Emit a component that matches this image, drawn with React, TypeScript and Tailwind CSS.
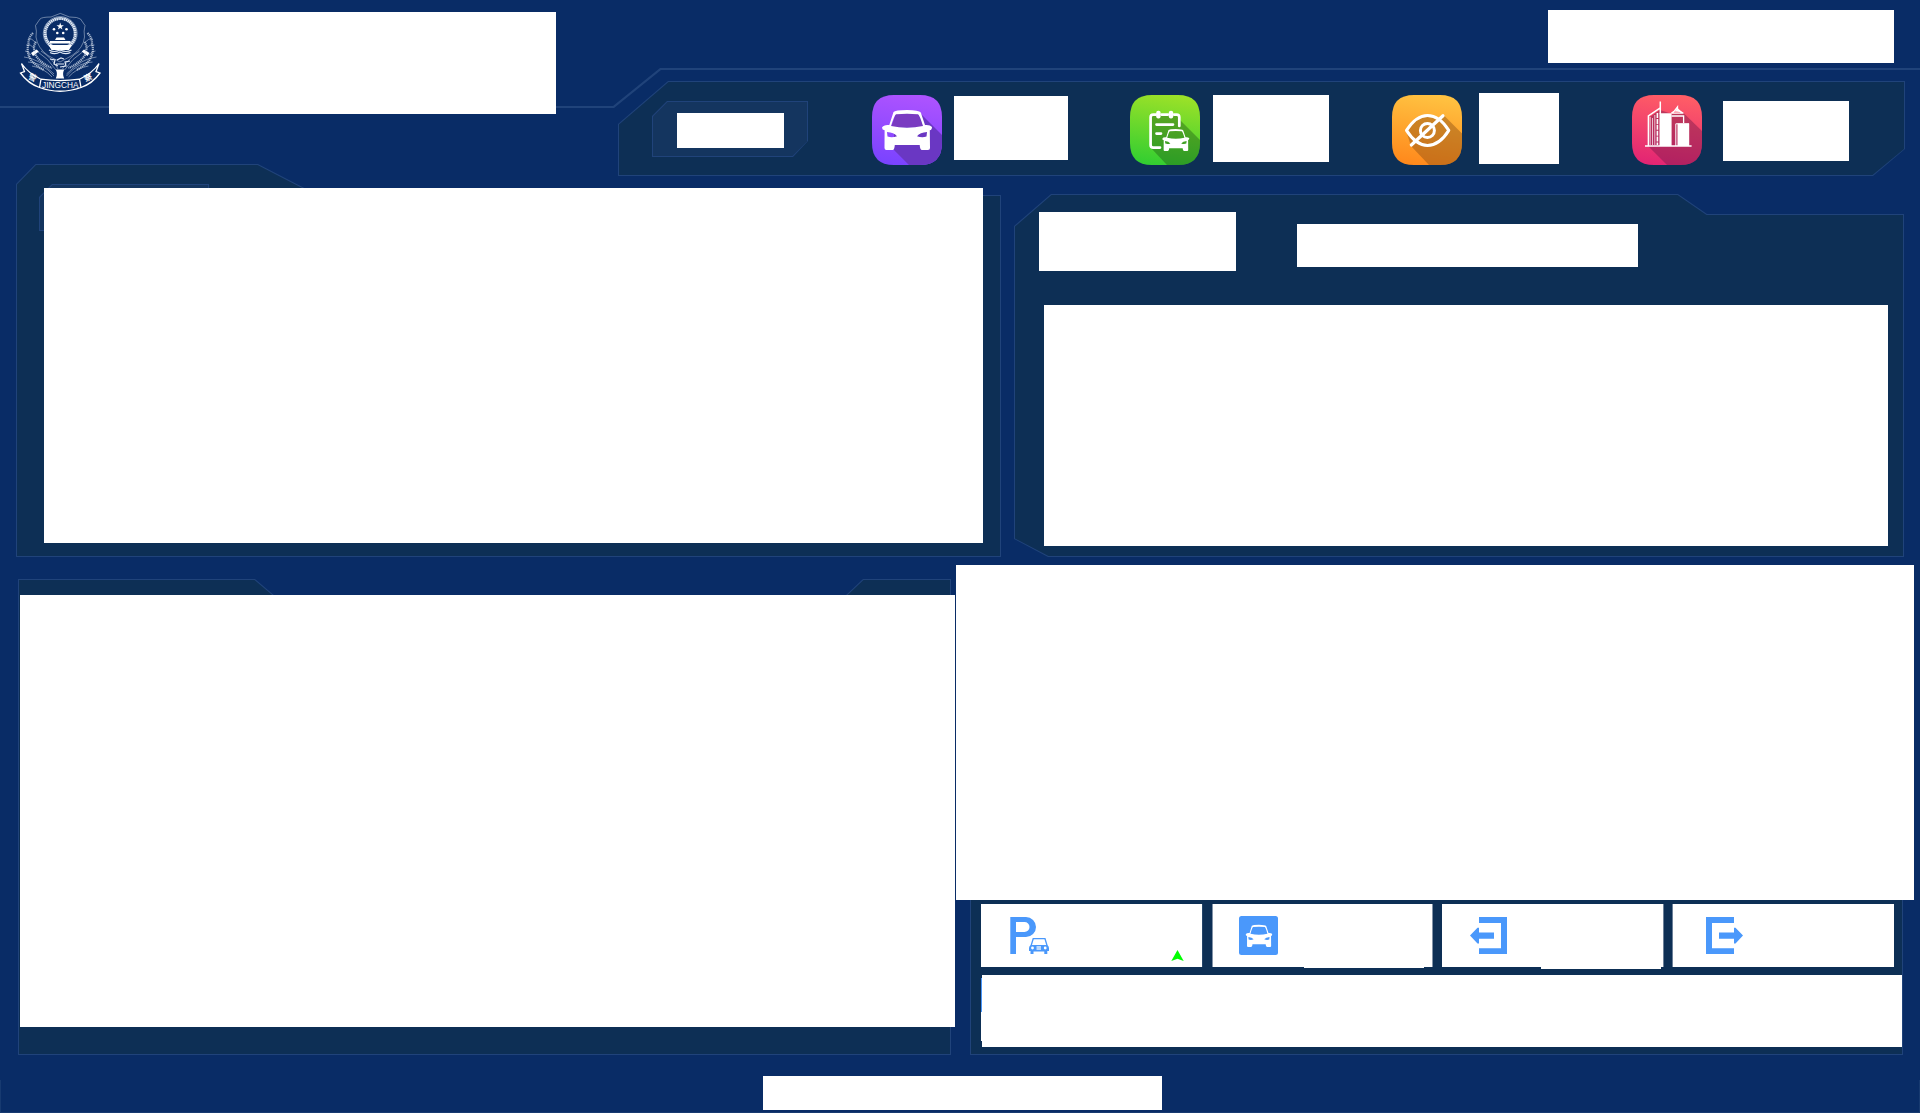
import React from "react";

type FrameProps = {
  className: string;
  outer: string;
  inner: string;
  fill?: string;
  children?: React.ReactNode;
};

/* Panel with cut corners: a border-coloured shape with a 1px smaller fill on top. */
function Frame({ className, outer, inner, fill = "bg-[#0d2f55]", children }: FrameProps) {
  return (
    <section className={`relative shrink-0 ${className}`}>
      <div className={`absolute inset-0 bg-[#20437a] ${outer}`}>
        <div className={`absolute inset-px ${fill} ${inner}`} />
      </div>
      <div className="relative">{children}</div>
    </section>
  );
}

const CAR =
  "M21.5 17Q23 15.2 35 15Q47 15.2 48.8 17.6L53 30Q58 29.5 60 32Q60 35 57.8 35.2L58 53Q58 55 56 55H50Q48 55 47.7 50H22.8Q22.5 55 20.5 55H14.5Q12.5 55 12.5 53L12.6 35.3Q10 35 10 32.5Q11.5 29.5 17.3 30ZM24 19.3Q35 18.3 46 19.3Q47.5 20 51 31Q35 34.6 19 31Q22.5 19.7 24 19.3ZM15 37Q22 37.5 25 41.2Q20 43 15.5 41.5ZM55 37Q48 37.5 45 41.2Q50 43 54.5 41.5Z";

function Tile({
  id,
  from,
  to,
  shadow,
  shade,
  children,
}: {
  id: string;
  from: string;
  to: string;
  shadow: string;
  shade: string;
  children: React.ReactNode;
}) {
  return (
    <svg className="size-[70px] shrink-0" viewBox="0 0 70 70" fill="none">
      <defs>
        <linearGradient id={id} x1="0.55" y1="0" x2="0.4" y2="1">
          <stop stopColor={from} />
          <stop offset="1" stopColor={to} />
        </linearGradient>
        <clipPath id={`${id}-clip`}>
          <path d="M22 0H48Q70 0 70 22V48Q70 70 48 70H22Q0 70 0 48V22Q0 0 22 0Z" />
        </clipPath>
      </defs>
      <g clipPath={`url(#${id}-clip)`}>
        <path d="M0 0H70V70H0Z" fill={`url(#${id})`} />
        <path d={shadow} fill={shade} />
        {children}
      </g>
    </svg>
  );
}

function CarTile() {
  return (
    <Tile id="car" from="#ad53ff" to="#7a43ff" shade="#6a37c3" shadow="M24 18H48L70 40V70H37L22 55V34H20Z">
      <path d="M24 19H46L51 32H19Z" fill="#7a3bc1" />
      <path d={CAR} fill="#fff" fillRule="evenodd" />
    </Tile>
  );
}

function ClipboardTile() {
  return (
    <Tile id="clip" from="#9be128" to="#33ce31" shade="rgba(25,75,20,0.38)" shadow="M21 20H50V25L70 45V70H37L21 53Z">
      <path
        d="M30 52.6H23.2Q20.6 52.6 20.6 50V22.3Q20.6 19.6 23.2 19.6H26M31.5 19.6H38M44 19.6H46.6Q49.3 19.6 49.3 22.3V31M26.5 29.6H43M26.5 38.6H31"
        stroke="#fff"
        strokeWidth="2.7"
        strokeLinecap="round"
      />
      <rect x="26.2" y="15.8" width="4.4" height="7.6" rx="2" fill="#fff" />
      <rect x="38.8" y="15.8" width="4.4" height="7.6" rx="2" fill="#fff" />
      <path d={CAR} fill="#fff" fillRule="evenodd" transform="translate(26.9 25.75) scale(0.54 0.55)" />
    </Tile>
  );
}

function EyeTile() {
  return (
    <Tile id="eye" from="#ffc241" to="#ff891c" shade="rgba(130,75,20,0.42)" shadow="M51.5 20L70 38.5V70H37L19 51L14 35.5L24 24L36 20L46 23Z">
      <path d="M14.5 35.4Q24 20.4 35.5 20.4Q47.5 20.4 56.8 35.4Q47.5 50.4 35.5 50.4Q24 50.4 14.5 35.4Z" stroke="#fff" strokeWidth="3" strokeLinejoin="round" />
      <circle cx="35.4" cy="35.5" r="7" stroke="#fff" strokeWidth="3" />
      <path d="M19.3 50L51 20.8" stroke="#fff" strokeWidth="3.2" strokeLinecap="round" />
    </Tile>
  );
}

function BuildingsTile() {
  return (
    <Tile id="city" from="#ff5d66" to="#e32573" shade="rgba(110,25,75,0.42)" shadow="M18 22L28 15L40 19L51 17.5L70 36V70H35L17 52Z">
      <path d="M13 51H59.6" stroke="#fff" strokeWidth="1.7" />
      <path d="M16.4 51V21L28.3 12.8M28.3 6.5V19" stroke="#fff" strokeWidth="1.5" />
      <path d="M18.2 50V22M20.5 50V23M22.8 50V20" stroke="#fff" strokeWidth="0.7" />
      <path d="M25.4 18V50" stroke="#fff" strokeWidth="1.6" strokeDasharray="5 0.9" />
      <path d="M27.5 18.3H39.6V51H27.5Z" fill="#fff" />
      <path d="M39.3 18.2L42.4 16L45.5 12V15L51 18M39.3 18.2H51.5M39.5 21H51.6V28" stroke="#fff" strokeWidth="1.3" />
      <path d="M42.6 16.6L45.5 13L50 17Z" fill="#fff" />
      <path d="M43.8 51V28.8H57" stroke="#fff" strokeWidth="1" />
      <path d="M45.5 28.4H57.2V51H45.5Z" fill="#fff" />
    </Tile>
  );
}

function Emblem() {
  return (
    <svg className="h-[82px] w-[82px]" viewBox="19 12 82 82" fill="none" stroke="#dfe8f4">
      <path d="M60.3 13.4L51 17Q42 17 40 19L35.5 25.5Q37 31 36 37Q37.5 48 48 55.5L60 62L72 55.5Q83.5 48 84.5 37Q83.5 31 85 25.5L80.5 19Q78 17 69.5 17Z" strokeWidth="0.6" opacity="0.75" />
      <circle cx="60.2" cy="33.5" r="15" strokeWidth="3" strokeDasharray="1.6 0.35" />
      <circle cx="60.2" cy="33.5" r="16.9" strokeWidth="0.5" />
      <path d="M60.2 22.6L61.1 25.3H63.9L61.6 27L62.5 29.6L60.2 28L57.9 29.6L58.8 27L56.5 25.3H59.3Z" fill="#fff" stroke="none" />
      <g fill="#fff" stroke="none">
        <circle cx="54" cy="29.2" r="1.3" />
        <circle cx="66.5" cy="29.2" r="1.3" />
        <circle cx="57.3" cy="33" r="1.3" />
        <circle cx="63.2" cy="33" r="1.3" />
        <path d="M55 40L56.5 37.5H64L65.5 40ZM50 41H70.5V43.6H50ZM48.5 45H72L69 50H51.5Z" />
        <path d="M31 53L36.5 49.5L38.8 51.5L33 56ZM89.5 53L84 49.5L81.7 51.5L87.5 56Z" />
      </g>
      <path d="M49 50Q54 53 60 50Q66 53 71.5 50M50 52.5Q55 55 60 52Q65 55 70.5 52.5" strokeWidth="1.2" />
      <g strokeWidth="2.2" strokeDasharray="1.2 0.7" opacity="0.75">
        <path d="M33 33Q28 38 28.5 44Q26 52 31 60Q36 66 44 70M36 42Q32 47 36 56Q42 64 52 68" />
        <path d="M87.5 33Q92.5 38 92 44Q94.5 52 89.5 60Q84.5 66 76.5 70M84.5 42Q88.5 47 84.5 56Q78.5 64 68.5 68" />
      </g>
      <g strokeWidth="0.6" opacity="0.8">
        <path d="M26 45Q31 44 34 48M25 51Q29 51 31 55M28 39Q32 38 35 42M24 57Q38 58 54 74M28 62Q42 62 54 76M38 52Q48 58 56 70M41 51Q52 58 58 69M32 66Q44 68 52 77" />
        <path d="M94.5 45Q89.5 44 86.5 48M95.5 51Q91.5 51 89.5 55M92.5 39Q88.5 38 85.5 42M96.5 57Q82.5 58 66.5 74M92.5 62Q78.5 62 66.5 76M82.5 52Q72.5 58 64.5 70M79.5 51Q68.5 58 62.5 69M88.5 66Q76.5 68 68.5 77" />
      </g>
      <path d="M50 59L55 60L54 64L58 66M64 59L61 58L57 60M70 61L65 62L66 66L60 67M56 64H64" strokeWidth="1.2" />
      <path d="M55.8 69.5H64.2Q62 74 64.2 78.5H55.8Q58 74 55.8 69.5Z" fill="#fff" stroke="none" />
      <path d="M41 79.2Q60 82 79.5 79.2L81 87.5Q60 95 39.5 87.5Z" fill="#092c66" strokeWidth="1.3" stroke="#fff" />
      <path d="M40.5 79Q28 73 21.5 63.5L24.5 71.5L20.5 73Q28 83.5 39.5 87.5M80 79Q92.5 73 99 63.5L96 71.5L100 73Q92.5 83.5 81 87.5" strokeWidth="1.3" stroke="#fff" />
      <g fill="#fff" stroke="none" fontFamily="'Liberation Sans', sans-serif">
        <text x="42" y="88.2" fontSize="9" textLength="36.500" lengthAdjust="spacingAndGlyphs">JINGCHA</text>
        <text x="28.500" y="80.500" fontSize="8" fontWeight="700" fontFamily="'Noto Sans CJK SC', sans-serif" transform="rotate(24 32.500 77.500)">警</text>
        <text x="84" y="80.500" fontSize="8" fontWeight="700" fontFamily="'Noto Sans CJK SC', sans-serif" transform="rotate(-24 88 77.500)">察</text>
      </g>
    </svg>
  );
}

function ParkingIcon() {
  return (
    <svg className="h-[37px] w-10" viewBox="0 0 40 37" fill="#4a98fb">
      <path fillRule="evenodd" d="M0.3 0H16A10 10 0 0 1 16 20H6V37H0.3ZM6 5V15H14.5A5 5 0 0 0 14.5 5Z" />
      <path d="M21 29L23.2 21.7H35L37.2 29" fill="none" stroke="#4a98fb" strokeWidth="1.3" />
      <path d="M21 28H37Q39 29 39 31V34H37.3V37H34.3V34.5H23.5V37H20.5V34H19V31Q19 29 21 28Z" />
      <circle cx="22.5" cy="31" r="1.4" fill="#fff" />
      <circle cx="35.2" cy="31" r="1.4" fill="#fff" />
      <path d="M26.5 29H31V33H26.5Z" fill="#b9d8fe" />
    </svg>
  );
}

function EntryIcon() {
  return (
    <svg className="size-[37px]" viewBox="0 0 37 37" fill="#4a98fb">
      <path d="M9 0H37V37H9V31.3H31V6H9Z" />
      <path d="M0 18.6L7.5 10.8H9V15.5H24V21.7H9V26.5H7.5Z" />
    </svg>
  );
}

function CarSquareIcon() {
  return (
    <svg className="size-[39px]" viewBox="0 0 39 39">
      <rect width="39" height="39" rx="2.5" fill="#4a98fb" />
      <path d={CAR} fill="#fff" fillRule="evenodd" transform="translate(1.4 0.3) scale(0.53 0.56)" />
    </svg>
  );
}

export default function App() {
  return (
    <main className="relative flex h-[1113px] w-[1920px] flex-col overflow-hidden bg-[#092c66]">
      {/* stepped rule below the title */}
      <div className="absolute inset-x-0 top-[68px] h-10 bg-[#20437a] [clip-path:polygon(0_38px,613px_38px,660px_0,1920px_0,1920px_2px,661px_2px,614px_40px,0_40px)]" />

      <header className="relative flex h-[164px] shrink-0">
        <div className="flex w-[618px] shrink-0 items-start pt-3 pl-[19px]">
          <Emblem />
          <div className="ml-2 h-[102px] w-[447px] bg-white" />
        </div>
        <div className="flex flex-col pt-2.5">
          <div className="mb-[18px] ml-[930px] h-[53px] w-[346px] shrink-0 bg-white" />
          <Frame
            className="h-[95px] w-[1287px]"
            outer="[clip-path:polygon(50px_0,100%_0,100%_68px,1255px_100%,0_100%,0_43px)]"
            inner="[clip-path:polygon(49.5px_0,100%_0,100%_67px,1253.5px_100%,0_100%,0_42.5px)]"
          >
            <div className="flex h-[95px] items-start pl-[34px]">
              <Frame
                className="mt-5 h-14 w-[156px]"
                fill="bg-[#14355f]"
                outer="[clip-path:polygon(15px_0,100%_0,100%_40px,141px_100%,0_100%,0_15px)]"
                inner="[clip-path:polygon(14.5px_0,100%_0,100%_39.5px,139.5px_100%,0_100%,0_14.5px)]"
              >
                <div className="pt-3 pl-[25px]">
                  <div className="h-[35px] w-[107px] bg-white" />
                </div>
              </Frame>
              <div className="mt-3.5 ml-16 flex w-[258px] items-start gap-3">
                <CarTile />
                <div className="mt-px h-16 w-[114px] bg-white" />
              </div>
              <div className="mt-3.5 flex w-[262px] items-start gap-[13px]">
                <ClipboardTile />
                <div className="h-[67px] w-[116px] bg-white" />
              </div>
              <div className="mt-3 flex w-60 items-start gap-[17px]">
                <div className="pt-0.5">
                  <EyeTile />
                </div>
                <div className="h-[71px] w-20 bg-white" />
              </div>
              <div className="mt-3.5 flex items-start gap-[21px]">
                <BuildingsTile />
                <div className="mt-1.5 h-[60px] w-[126px] bg-white" />
              </div>
            </div>
          </Frame>
        </div>
      </header>

      <div className="flex shrink-0 items-start gap-[13px] pl-4">
        <Frame
          className="h-[393px] w-[985px]"
          outer="[clip-path:polygon(19.5px_0,242px_0,302px_31px,100%_31px,100%_100%,0_100%,0_20px)]"
          inner="[clip-path:polygon(19px_0,240.5px_0,300.5px_31px,100%_31px,100%_100%,0_100%,0_19.5px)]"
        >
          <div className="flex pt-5 pl-[23px]">
            <Frame
              className="h-[47px] w-[170px]"
              fill="bg-[#14355f]"
              outer="[clip-path:polygon(13px_0,100%_0,100%_100%,0_100%,0_13px)]"
              inner="[clip-path:polygon(12.5px_0,100%_0,100%_100%,0_100%,0_12.5px)]"
            />
            <div className="relative mt-1 ml-[-165px] h-[355px] w-[939px] shrink-0 bg-white" />
          </div>
        </Frame>
        <Frame
          className="mt-[30px] h-[363px] w-[890px]"
          outer="[clip-path:polygon(37px_0,664px_0,693px_20px,100%_20px,100%_100%,34px_100%,0_345px,0_32px)]"
          inner="[clip-path:polygon(36.5px_0,662.5px_0,691.5px_20px,100%_20px,100%_100%,33.5px_100%,0_343.5px,0_31.5px)]"
        >
          <div className="flex items-start gap-[61px] pt-[18px] pl-[25px]">
            <div className="h-[59px] w-[197px] bg-white" />
            <div className="mt-3 h-[43px] w-[341px] bg-white" />
          </div>
          <div className="mt-[34px] ml-[30px] h-[241px] w-[844px] bg-white" />
        </Frame>
      </div>

      <div className="flex shrink-0 items-start pl-[18px]">
        <Frame
          className="mt-[22px] h-[476px] w-[933px]"
          outer="[clip-path:polygon(0_0,237px_0,257px_17px,827px_17px,845px_0,100%_0,100%_100%,0_100%)]"
          inner="[clip-path:polygon(0_0,235.5px_0,255.5px_17px,826.5px_17px,844.5px_0,100%_0,100%_100%,0_100%)]"
        >
          <div className="pt-4 pl-0.5">
            <div className="h-[432px] w-[935px] bg-white" />
          </div>
        </Frame>
        <div className="mt-2 ml-[5px] w-[958px]">
          <div className="h-[335px] bg-white" />
          <section className="ml-3.5 flex h-[155px] w-[933px] flex-col border-x border-b border-[#20437a] bg-[#0d2f55] pt-1 pl-2.5">
            <div className="flex h-[71px] items-start">
              <div className="flex h-[63px] w-[222px] items-start border-r border-[#24456a] bg-white pt-[13px] pl-[29px]">
                <ParkingIcon />
                <svg className="mt-[33px] ml-[121px] h-[11px] w-[13px]" viewBox="0 0 13 11" fill="#00ff00">
                  <path d="M6.5 0L12.7 11L6.5 8.8L0.3 11Z" />
                </svg>
              </div>
              <div className="ml-[9px] h-16 w-[221px]">
                <div className="h-[63px] border-x border-[#8293a8] bg-white pt-3 pl-[26px]">
                  <CarSquareIcon />
                </div>
                <div className="ml-[92px] h-px w-[120px] bg-white" />
              </div>
              <div className="ml-[9px] h-[65px] w-[222px]">
                <div className="h-[63px] border-r border-[#6c8099] bg-white pt-[13px] pl-7">
                  <EntryIcon />
                </div>
                <div className="ml-[99px] h-0.5 w-[120px] bg-white" />
              </div>
              <div className="ml-2 h-[63px] w-[222px] border-l border-[#6c8099] bg-white pt-[13px] pl-[33px]">
                <div className="w-[37px] -scale-x-100">
                  <EntryIcon />
                </div>
              </div>
            </div>
            <div className="flex">
              <div className="flex w-px flex-col pt-[3px]">
                <div className="h-[34px] bg-[#4a98fb]" />
                <div className="h-[29px] bg-white" />
              </div>
              <div className="h-[72px] w-[920px] bg-white" />
            </div>
          </section>
        </div>
      </div>

      <footer className="mt-[25px] flex h-[33px] shrink-0 items-start justify-start border-x border-b border-[#173a70]">
        <div className="-mt-1 ml-[762px] h-[34px] w-[399px] bg-white" />
      </footer>
    </main>
  );
}
